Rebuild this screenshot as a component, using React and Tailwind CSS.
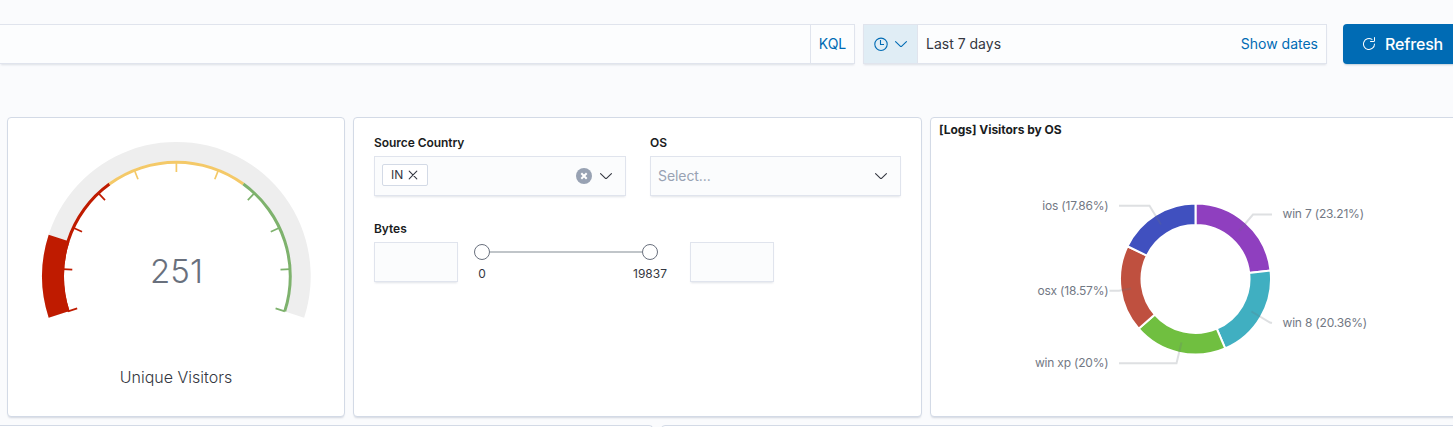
import React from 'react';

const polar = (cx, cy, r, deg) => {
  const a = (deg * Math.PI) / 180;
  return [cx + r * Math.sin(a), cy - r * Math.cos(a)];
};

const ring = (cx, cy, r0, r1, from, to) => {
  const large = to - from > 180 ? 1 : 0;
  const [ax, ay] = polar(cx, cy, r1, from);
  const [bx, by] = polar(cx, cy, r1, to);
  const [ex, ey] = polar(cx, cy, r0, to);
  const [dx, dy] = polar(cx, cy, r0, from);
  return `M${ax} ${ay}A${r1} ${r1} 0 ${large} 1 ${bx} ${by}L${ex} ${ey}A${r0} ${r0} 0 ${large} 0 ${dx} ${dy}Z`;
};

const RED = '#bf1b00';
const YELLOW = '#f4c968';
const GREEN = '#7eb26d';

function ArrowDown({ className }) {
  return (
    <svg className={className} width="16" height="16" viewBox="0 0 16 16" fill="currentColor">
      <path d="M13.069 5.157 8.384 9.768a.546.546 0 0 1-.768 0L2.93 5.158a.552.552 0 0 0-.771 0 .53.53 0 0 0 0 .759l4.684 4.61a1.65 1.65 0 0 0 2.312 0l4.684-4.61a.53.53 0 0 0 0-.76.552.552 0 0 0-.771 0z" />
    </svg>
  );
}

function Clock() {
  return (
    <svg width="16" height="16" viewBox="0 0 16 16" fill="none" stroke="currentColor" strokeWidth="1.1">
      <circle cx="8" cy="8.3" r="6.2" />
      <path d="M7.5 4v4.5H11" />
    </svg>
  );
}

function RefreshIcon() {
  return (
    <svg width="16" height="16" viewBox="0 0 16 16" fill="currentColor">
      <path d="M11.228 2.942a.5.5 0 1 1-.538.842A5 5 0 1 0 13 8a.5.5 0 1 1 1 0 6 6 0 1 1-2.772-5.058zM14 1.5v3A1.5 1.5 0 0 1 12.5 6h-3a.5.5 0 0 1 0-1h3a.5.5 0 0 0 .5-.5v-3a.5.5 0 1 1 1 0z" />
    </svg>
  );
}

function Cross({ size }) {
  return (
    <svg width={size} height={size} viewBox="0 0 10 10" fill="none" stroke="currentColor" strokeWidth="1.1" strokeLinecap="round">
      <path d="M1.2 1.2l7.6 7.6M8.8 1.2L1.2 8.8" />
    </svg>
  );
}

function Gauge() {
  const c = [168.4, 158.2];
  const bands = [
    [-108, -36, RED],
    [-36, 36, YELLOW],
    [36, 108, GREEN],
  ];
  const ticks = Array.from({ length: 11 }, (_, i) => -108 + i * 21.6);
  const tickColor = (a) => (a < -36 ? RED : a > 36 ? GREEN : YELLOW);
  return (
    <svg width="336" height="298" className="block">
      <path d={ring(...c, 115, 134.3, -108, 108)} fill="#eeeeee" />
      {bands.map(([from, to, fill]) => (
        <path key={fill} d={ring(...c, 112.4, 115.4, from, to)} fill={fill} />
      ))}
      <path d={ring(...c, 112.4, 134.3, -108, -72)} fill={RED} />
      {ticks.map((a) => {
        const [x1, y1] = polar(...c, 114, a);
        const [x2, y2] = polar(...c, 104.3, a);
        return <line key={a} x1={x1} y1={y1} x2={x2} y2={y2} stroke={tickColor(a)} strokeWidth="1.7" />;
      })}
      <text x="168.5" y="165" textAnchor="middle" fontSize="33" fontWeight="300" fill="#69707d">251</text>
      <text x="168" y="265" textAnchor="middle" fontSize="16" fontWeight="300" fill="#343741">Unique Visitors</text>
    </svg>
  );
}

const SLICES = [
  { label: 'win 7 (23.21%)', value: 23.21, color: '#8f3fbf', x: 351.5, y: 99.5, anchor: 'start', line: '341,96.5 322,96.5 308,113' },
  { label: 'win 8 (20.36%)', value: 20.36, color: '#40afc1', x: 351.5, y: 209, anchor: 'start', line: '341,205 339,204.5 320.5,193.5' },
  { label: 'win xp (20%)', value: 20, color: '#70bf40', x: 177.5, y: 249, anchor: 'end', line: '188,245.2 245.5,245.2 250.5,224.5' },
  { label: 'osx (18.57%)', value: 18.57, color: '#bf503f', x: 177.5, y: 177, anchor: 'end', line: '178.5,172.7 188,172.7 200,170.5' },
  { label: 'ios (17.86%)', value: 17.86, color: '#4050bf', x: 177.5, y: 92, anchor: 'end', line: '188,87.7 218.5,87.7 230,106.5' },
];

function Donut() {
  let start = 0;
  const slices = SLICES.map((s) => {
    const from = start;
    start += s.value * 3.6;
    return { ...s, from, to: start };
  });
  return (
    <svg width="522" height="298" className="block shrink-0">
      {slices.map((s) => (
        <path key={s.label} d={ring(264.5, 161, 54, 75.5, s.from, s.to)} fill={s.color} stroke="#fff" strokeWidth="2" />
      ))}
      {slices.map((s) => (
        <polyline key={s.label} points={s.line} fill="none" stroke="#69707d" strokeOpacity="0.22" strokeWidth="2" />
      ))}
      {slices.map((s) => (
        <text key={s.label} x={s.x} y={s.y} textAnchor={s.anchor} fontSize="12" letterSpacing="-0.19" fill="#727884">{s.label}</text>
      ))}
    </svg>
  );
}

const field = 'border border-[#e0e4ed] bg-[#fbfcfd] shadow-[0_2px_2px_-1px_rgba(152,162,179,0.3)]';
const panel = 'shrink-0 overflow-hidden rounded border border-[#d3dae6] bg-white shadow-[0_2px_2px_-1px_rgba(152,162,179,0.4)]';
const label = 'h-[21px] text-xs leading-4 font-semibold tracking-[-0.06px] text-[#1a1c21]';

export default function App() {
  return (
    <div className="h-[427px] w-[1453px] overflow-hidden bg-[#fafbfd] font-['Inter',sans-serif] text-[#343741]">
      <div className="flex h-[117px] pt-6">
        <div className="flex h-10 w-[855px] shrink-0 border border-l-0 border-[#e0e4ed] bg-[#fcfdfe] shadow-[0_2px_2px_-1px_rgba(152,162,179,0.3)]">
          <div className="flex-1" />
          <div className="flex w-11 items-center justify-center border-l border-[#e0e4ed] text-sm text-[#006bb4]">KQL</div>
        </div>
        <div className="ml-2 flex h-10 w-[464px] shrink-0 border border-[#e0e4ed] bg-[#fcfdfe] shadow-[0_2px_2px_-1px_rgba(152,162,179,0.3)]">
          <div className="flex w-[54px] items-center gap-1 border-r border-[#e0e4ed] bg-[#e0edf5] pl-[9px] text-[#006bb4]">
            <Clock />
            <ArrowDown />
          </div>
          <div className="flex flex-1 items-center justify-between pr-2 pl-2 text-sm">
            <span>Last 7 days</span>
            <span className="text-[#006bb4]">Show dates</span>
          </div>
        </div>
        <button className="ml-4 flex h-10 w-[124px] shrink-0 items-center gap-2 rounded bg-[#006bb4] pl-[18px] text-base font-medium tracking-[-0.15px] text-white shadow-[0_2px_2px_-1px_rgba(54,97,126,0.3)]">
          <RefreshIcon />
          <span className="-mt-px">Refresh</span>
        </button>
      </div>

      <div className="ml-[7px] flex h-[300px] gap-2">
        <section className={`${panel} w-[338px]`}>
          <Gauge />
        </section>

        <section className={`${panel} w-[569px] px-5 pt-[17px]`}>
          <div className="flex gap-6">
            <div className="w-[252px]">
              <div className={label}>Source Country</div>
              <div className={`${field} flex h-10 items-center pr-[11px] pl-[7px]`}>
                <div className="mt-[-2px] flex h-[22px] w-[46px] items-center gap-[5px] rounded-xs border border-[#d3dae6] bg-white pl-2 text-xs">
                  <span>IN</span>
                  <Cross size={10} />
                </div>
                <span className="ml-auto flex size-4 items-center justify-center rounded-full bg-[#98a2b3] text-white">
                  <svg width="8" height="8" viewBox="0 0 8 8" fill="none" stroke="currentColor" strokeWidth="2">
                    <path d="M1.3 1.3l5.4 5.4M6.7 1.3L1.3 6.7" />
                  </svg>
                </span>
                <ArrowDown className="ml-1.5" />
              </div>
            </div>
            <div className="w-[251px]">
              <div className={label}>OS</div>
              <div className={`${field} flex h-10 items-center justify-between pr-[11px] pl-[7px]`}>
                <span className="text-sm tracking-[-0.07px] text-[#98a2b3]">Select...</span>
                <ArrowDown />
              </div>
            </div>
          </div>
          <div className={`${label} mt-[25px]`}>Bytes</div>
          <div className="flex">
            <div className={`${field} h-10 w-[84px]`} />
            <div className="mr-8 ml-4 w-[184px]">
              <div className="flex h-5 items-center">
                <span className="size-4 rounded-full border border-[#69707d] bg-white" />
                <span className="h-0.5 flex-1 bg-[#c0c5c9]" />
                <span className="size-4 rounded-full border border-[#69707d] bg-white" />
              </div>
              <div className="mt-1 flex justify-between text-xs leading-4">
                <span className="flex w-4 justify-center">0</span>
                <span className="flex w-4 justify-center">19837</span>
              </div>
            </div>
            <div className={`${field} h-10 w-[84px]`} />
          </div>
        </section>

        <section className={`${panel} relative w-[540px]`}>
          <h2 className="absolute top-1 left-2 text-xs leading-4 font-bold tracking-[-0.04px] text-[#1a1c21]">[Logs] Visitors by OS</h2>
          <Donut />
        </section>
      </div>

      <div className="mt-2 flex gap-2">
        <div className="h-10 w-[653px] shrink-0 rounded-tr border border-l-0 border-[#d3dae6] bg-white" />
        <div className="h-10 w-[900px] shrink-0 rounded-tl border border-[#d3dae6] bg-white" />
      </div>
    </div>
  );
}
